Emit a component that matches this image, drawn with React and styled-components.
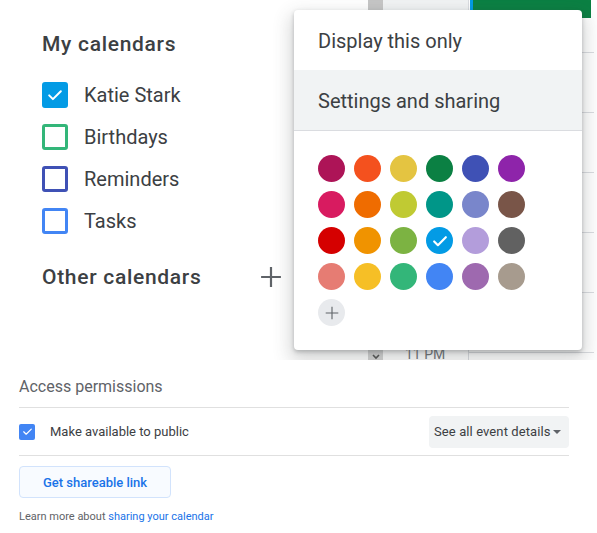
import React from 'react';
import styled, { createGlobalStyle } from 'styled-components';

const GlobalStyle = createGlobalStyle`
  body {
    margin: 0;
    background: #fff;
    font-family: Roboto, "Liberation Sans", Arial, sans-serif;
    color: #3c4043;
  }
`;

const Page = styled.div`
  width: 597px;
  height: 533px;
  overflow: hidden;
`;

const TopArea = styled.div`
  position: relative;
  height: 360px;
  display: flex;
  overflow: hidden;
`;

const Sidebar = styled.div`
  width: 297px;
  flex: none;
  padding: 32px 0 0 42px;
  box-sizing: border-box;
`;

const SectionTitle = styled.div`
  font-size: 21px;
  line-height: 24px;
  font-weight: 500;
  color: #3c4043;
  letter-spacing: 0.7px;
`;

const CalList = styled.div`
  margin: 18px 0 23px;
`;

const CalRow = styled.div`
  height: 42px;
  display: flex;
  align-items: center;
  gap: 16px;
  font-size: 20px;
  color: #3c4043;
`;

const Box = styled.span`
  width: 26px;
  height: 26px;
  box-sizing: border-box;
  border-radius: 3px;
  border: 3px solid ${p => p.$color};
  background: ${p => (p.$checked ? p.$color : 'transparent')};
  display: flex;
  align-items: center;
  justify-content: center;
`;

const OtherRow = styled.div`
  display: flex;
  align-items: center;
  justify-content: space-between;
  width: 240px;
`;

const Backdrop = styled.div`
  flex: 1;
  display: flex;
`;

const Gutter = styled.div`
  width: 71px;
`;

const ScrollCol = styled.div`
  width: 15px;
  display: flex;
  flex-direction: column;
  justify-content: space-between;
  align-items: center;
`;

const ScrollThumb = styled.div`
  width: 15px;
  height: 10px;
  background: #c6c6c6;
`;

const ScrollArrow = styled.div`
  width: 15px;
  height: 12px;
  background: #d4d4d4;
  display: flex;
  align-items: flex-end;
  justify-content: center;
`;

const TimeCol = styled.div`
  width: 85px;
  display: flex;
  flex-direction: column;
  justify-content: space-between;
  background: linear-gradient(#f1f3f4, #f1f3f4) top / 100% 10px no-repeat;
`;

const TimeLabel = styled.div`
  font-size: 14px;
  line-height: 16px;
  color: #70757a;
  padding-left: 22px;
  margin-bottom: -2px;
`;

const DayCol = styled.div`
  width: 125px;
  border-left: 1px solid #dadce0;
  background: repeating-linear-gradient(
    to bottom,
    transparent 0 52px,
    #dadce0 52px 53px,
    transparent 53px 60px
  );
`;

const EventBlock = styled.div`
  height: 18px;
  width: 118px;
  margin-left: 1px;
  border-left: 3px solid #039be5;
  background: #0b8043;
`;

const Popup = styled.div`
  position: absolute;
  left: 294px;
  top: 10px;
  width: 288px;
  height: 340px;
  background: #fff;
  border-radius: 4px;
  box-shadow: 0 8px 18px 4px rgba(60, 64, 67, 0.2), 0 2px 4px rgba(60, 64, 67, 0.3);
`;

const MenuItem = styled.div`
  height: 60px;
  display: flex;
  align-items: center;
  padding: 2px 0 0 24px;
  box-sizing: border-box;
  font-size: 20px;
  color: #3c4043;
  background: ${p => (p.$active ? '#f1f3f4' : 'transparent')};
`;

const Divider = styled.div`
  height: 1px;
  background: #dadce0;
`;

const Swatches = styled.div`
  padding: 24px 0 0 24px;
  display: grid;
  grid-template-columns: repeat(6, 27px);
  grid-auto-rows: 27px;
  gap: 9px;
`;

const Swatch = styled.span`
  width: 27px;
  height: 27px;
  border-radius: 50%;
  background: ${p => p.$color};
  display: flex;
  align-items: center;
  justify-content: center;
`;

const Settings = styled.div`
  padding: 17px 28px 0 19px;
`;

const SubTitle = styled.div`
  font-size: 16px;
  line-height: 20px;
  color: #5f6368;
  padding-bottom: 10px;
  border-bottom: 1px solid #e0e0e0;
`;

const PublicRow = styled.div`
  height: 47px;
  display: flex;
  align-items: center;
  justify-content: space-between;
  border-bottom: 1px solid #e0e0e0;
`;

const PublicLabel = styled.label`
  display: flex;
  align-items: center;
  gap: 15px;
  font-size: 13px;
  color: #3c4043;
`;

const SmallBox = styled.span`
  width: 16px;
  height: 16px;
  border-radius: 2px;
  background: #4285f4;
  display: flex;
  align-items: center;
  justify-content: center;
`;

const Select = styled.div`
  height: 32px;
  width: 140px;
  box-sizing: border-box;
  padding: 0 8px 0 5px;
  border-radius: 4px;
  background: #f1f3f4;
  display: flex;
  align-items: center;
  justify-content: space-between;
  white-space: nowrap;
  font-size: 13px;
  letter-spacing: 0.1px;
  color: #3c4043;
`;

const Caret = styled.span`
  width: 0;
  height: 0;
  border-left: 4px solid transparent;
  border-right: 4px solid transparent;
  border-top: 4px solid #5f6368;
`;

const LinkButton = styled.button`
  margin-top: 10px;
  width: 152px;
  height: 32px;
  border: 1px solid #d2e3fc;
  border-radius: 4px;
  background: #f8fbff;
  color: #1a73e8;
  font-family: inherit;
  font-size: 13px;
  font-weight: 500;
`;

const Footnote = styled.div`
  margin-top: 12px;
  font-size: 11px;
  color: #5f6368;
`;

const Link = styled.a`
  color: #1a73e8;
  text-decoration: none;
`;

const Check = ({ size = 18, width = 2.6 }) => (
  <svg width={size} height={size} viewBox="0 0 24 24">
    <path d="M5 12.5l4.5 4.5L19 7.5" fill="none" stroke="#fff" strokeWidth={width} strokeLinecap="round" strokeLinejoin="round" />
  </svg>
);

const Plus = ({ size, color, width }) => (
  <svg width={size} height={size} viewBox="0 0 20 20">
    <path d="M10 1v18M1 10h18" stroke={color} strokeWidth={width} />
  </svg>
);

const calendars = [
  { name: 'Katie Stark', color: '#039be5', checked: true },
  { name: 'Birthdays', color: '#33b679' },
  { name: 'Reminders', color: '#3f51b5' },
  { name: 'Tasks', color: '#4285f4' },
];

const colors = [
  '#ad1457', '#f4511e', '#e4c441', '#0b8043', '#3f51b5', '#8e24aa',
  '#d81b60', '#ef6c00', '#c0ca33', '#009688', '#7986cb', '#795548',
  '#d50000', '#f09300', '#7cb342', '#039be5', '#b39ddb', '#616161',
  '#e67c73', '#f6bf26', '#33b679', '#4285f4', '#9e69af', '#a79b8e',
];

const App = () => (
  <Page>
    <GlobalStyle />
    <TopArea>
      <Sidebar>
        <SectionTitle>My calendars</SectionTitle>
        <CalList>
          {calendars.map(c => (
            <CalRow key={c.name}>
              <Box $color={c.color} $checked={c.checked}>
                {c.checked && <Check size={20} width={2.4} />}
              </Box>
              {c.name}
            </CalRow>
          ))}
        </CalList>
        <OtherRow>
          <SectionTitle>Other calendars</SectionTitle>
          <Plus size={22} color="#5f6368" width={2} />
        </OtherRow>
      </Sidebar>
      <Backdrop>
        <Gutter />
        <ScrollCol>
          <ScrollThumb />
          <ScrollArrow>
            <svg width="8" height="6" viewBox="0 0 8 6">
              <path d="M1 1l3 3 3-3" fill="none" stroke="#555" strokeWidth="1.6" />
            </svg>
          </ScrollArrow>
        </ScrollCol>
        <TimeCol>
          <span />
          <TimeLabel>11 PM</TimeLabel>
        </TimeCol>
        <DayCol>
          <EventBlock />
        </DayCol>
      </Backdrop>
      <Popup>
        <MenuItem>Display this only</MenuItem>
        <MenuItem $active>Settings and sharing</MenuItem>
        <Divider />
        <Swatches>
          {colors.map(c => (
            <Swatch key={c} $color={c}>
              {c === '#039be5' && <Check size={20} width={2.6} />}
            </Swatch>
          ))}
          <Swatch $color="#e8eaed">
            <Plus size={14} color="#5f6368" width={1.6} />
          </Swatch>
        </Swatches>
      </Popup>
    </TopArea>
    <Settings>
      <SubTitle>Access permissions</SubTitle>
      <PublicRow>
        <PublicLabel>
          <SmallBox>
            <Check size={13} width={2.2} />
          </SmallBox>
          Make available to public
        </PublicLabel>
        <Select>
          See all event details
          <Caret />
        </Select>
      </PublicRow>
      <LinkButton>Get shareable link</LinkButton>
      <Footnote>
        Learn more about <Link href="#">sharing your calendar</Link>
      </Footnote>
    </Settings>
  </Page>
);

export default App;
